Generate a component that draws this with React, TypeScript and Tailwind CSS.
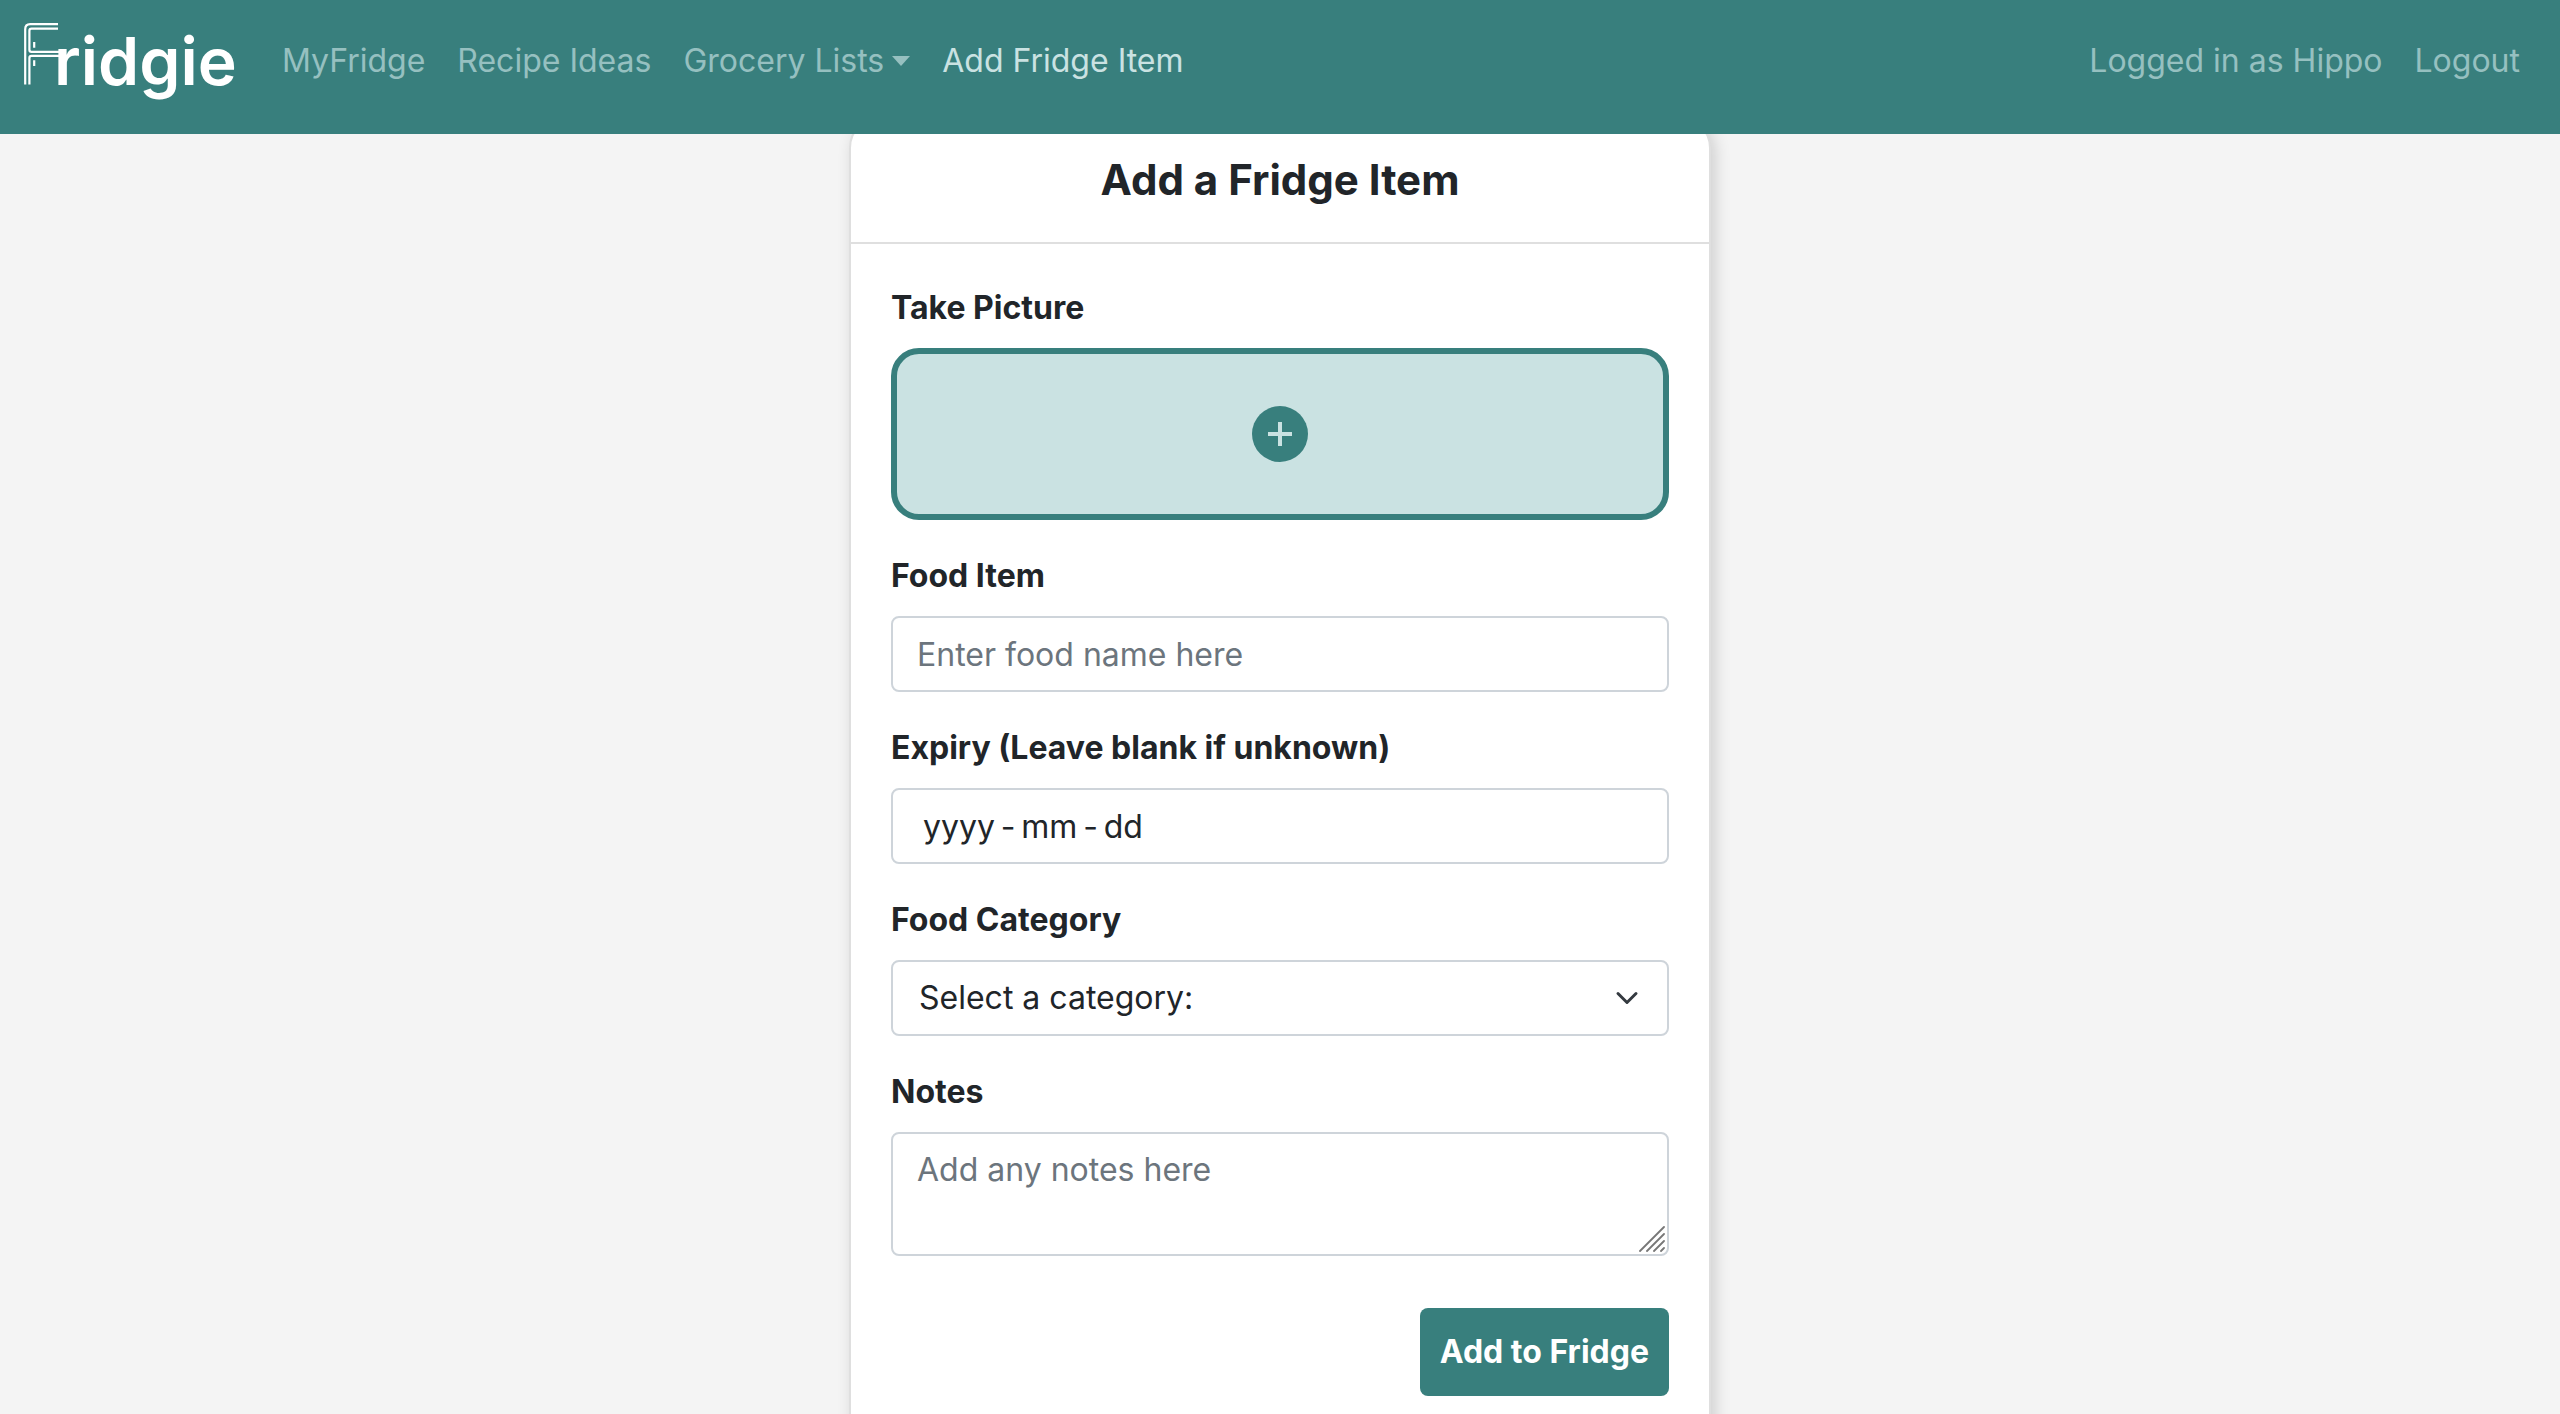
import type { ReactNode } from "react";

const control =
  "block w-full rounded-lg border-2 border-[#ced4da] bg-white px-6 py-3 leading-[48px] text-[#212529] outline-none placeholder:text-[#6c757d] placeholder:opacity-100 focus:border-[#387f7d]";

function Brand() {
  return (
    <a href="#" aria-label="Fridgie" className="flex h-[80px] w-[210px] shrink-0 items-start text-white">
      <svg className="shrink-0" width="36" height="62" viewBox="0 0 36 62" fill="none" stroke="currentColor" strokeWidth="2.2" aria-hidden="true">
        <path d="M1.2 61.5V6.2Q1.2 1.2 6.2 1.2H34" />
        <path d="M34 5.7H7.5Q5.4 5.7 5.4 7.8V26.7Q5.4 28.8 7.5 28.8H38" />
        <path d="M36 32.9H7.5Q5.4 32.9 5.4 35V61.5" />
        <path d="M10.2 19V24.8M10.2 37.2V43" />
      </svg>
      <span className="-ml-1.5 text-[66px] font-semibold leading-[76px]">ridgie</span>
    </a>
  );
}

function NavLink({ children, active }: { children: ReactNode; active?: boolean }) {
  return (
    <a
      href="#"
      aria-current={active ? "page" : undefined}
      className={`flex items-center px-4 ${active ? "text-[#cae2e2]" : "text-[#96c0c0]"}`}
    >
      {children}
    </a>
  );
}

function Field({ id, label, children }: { id: string; label: string; children: ReactNode }) {
  return (
    <div className="mb-8">
      <label htmlFor={id} className="mb-4 block font-bold">
        {label}
      </label>
      {children}
    </div>
  );
}

export default function App() {
  return (
    <div className="min-h-screen bg-[#f4f4f4] font-['Inter',sans-serif] text-[32px] leading-[48px] text-[#212529]">
      <header className="fixed inset-x-0 top-0 z-10 flex h-[134px] items-start bg-[#387f7d] px-6 pt-[23px]">
        <Brand />
        <nav className="ml-8 mt-[14px] flex flex-1 justify-between">
          <div className="flex">
            <NavLink>MyFridge</NavLink>
            <NavLink>Recipe Ideas</NavLink>
            <NavLink>
              Grocery Lists
              <svg className="ml-2" width="18" height="10" viewBox="0 0 18 10" fill="currentColor" aria-hidden="true">
                <path d="M0 0H18L9 10Z" />
              </svg>
            </NavLink>
            <NavLink active>Add Fridge Item</NavLink>
          </div>
          <div className="flex">
            <NavLink>Logged in as Hippo</NavLink>
            <NavLink>Logout</NavLink>
          </div>
        </nav>
      </header>

      <main className="px-6 pt-[116px]">
        <section className="mx-auto w-full max-w-[862px] rounded-[32px] border-2 border-[#dfdfdf] bg-white shadow-[4px_4px_16px_rgba(0,0,0,0.16)]">
          <h1 className="border-b-2 border-[#dfdfdf] py-[38px] text-center text-[42px] font-bold leading-[48px]">
            Add a Fridge Item
          </h1>
          <form className="p-10 pb-20" onSubmit={(e) => e.preventDefault()}>
            <Field id="picture" label="Take Picture">
              <label
                htmlFor="picture"
                className="flex h-[172px] cursor-pointer items-center justify-center rounded-[28px] border-6 border-[#387f7d] bg-[#cae2e2]"
              >
                <svg width="56" height="56" viewBox="0 0 56 56" role="img" aria-label="Add picture">
                  <circle cx="28" cy="28" r="28" fill="#387f7d" />
                  <path d="M28 16V40M16 28H40" stroke="#cae2e2" strokeWidth="4" />
                </svg>
                <input id="picture" type="file" accept="image/*" className="sr-only" />
              </label>
            </Field>

            <Field id="food" label="Food Item">
              <input id="food" type="text" placeholder="Enter food name here" className={`${control} h-[76px]`} />
            </Field>

            <Field id="expiry" label="Expiry (Leave blank if unknown)">
              <input
                id="expiry"
                type="text"
                inputMode="numeric"
                placeholder={"yyyy\u2009-\u2009mm\u2009-\u2009dd"}
                className="block h-[76px] w-full rounded-lg border-2 border-[#ced4da] bg-white px-[30px] py-3 leading-[48px] outline-none placeholder:text-[#212529] placeholder:opacity-100 focus:border-[#387f7d]"
              />
            </Field>

            <Field id="category" label="Food Category">
              <div className="relative">
                <select id="category" defaultValue="" className={`${control} h-[76px] appearance-none pl-[26px]`}>
                  <option value="">Select a category:</option>
                  <option>Fruit</option>
                  <option>Vegetables</option>
                  <option>Dairy</option>
                  <option>Meat</option>
                </select>
                <svg
                  className="pointer-events-none absolute right-[30px] top-[26px]"
                  width="24"
                  height="24"
                  viewBox="0 0 16 16"
                  fill="none"
                  stroke="#343a40"
                  strokeWidth="2"
                  strokeLinecap="round"
                  strokeLinejoin="round"
                  aria-hidden="true"
                >
                  <path d="M2 5l6 6 6-6" />
                </svg>
              </div>
            </Field>

            <Field id="notes" label="Notes">
              <div className="relative">
                <textarea id="notes" placeholder="Add any notes here" className={`${control} h-[124px] resize-none`} />
                <svg
                  className="pointer-events-none absolute bottom-1 right-1"
                  width="26"
                  height="26"
                  viewBox="0 0 26 26"
                  stroke="#777777"
                  strokeWidth="1.8"
                  strokeLinecap="round"
                  aria-hidden="true"
                >
                  <path d="M1 25L25 1M8 25L25 8M15 25L25 15M22 25L25 22" />
                </svg>
              </div>
            </Field>

            <div className="flex justify-end pt-5">
              <button type="submit" className="rounded-lg bg-[#387f7d] p-5 font-bold text-white">
                Add to Fridge
              </button>
            </div>
          </form>
        </section>
      </main>
    </div>
  );
}
